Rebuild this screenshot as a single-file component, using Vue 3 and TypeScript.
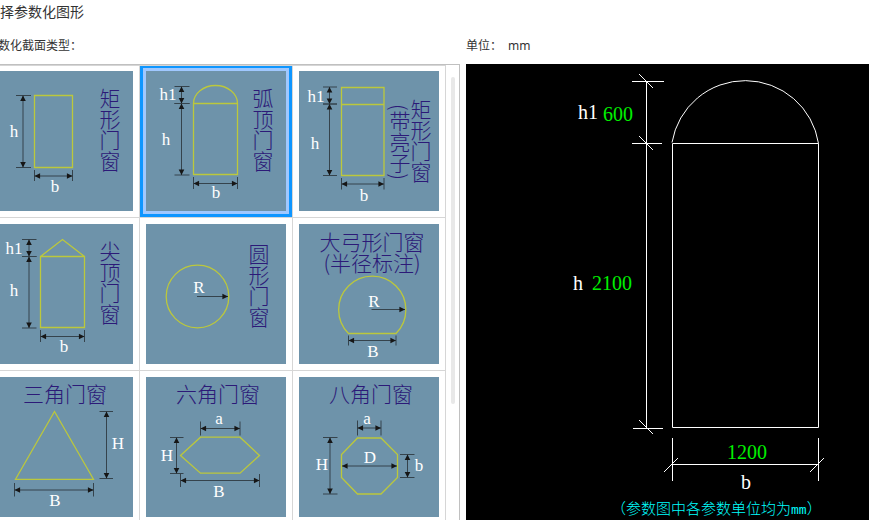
<script setup lang="ts">
import { ref } from 'vue'

type Dim = { at: number; from: number; to: number; t1: number; t2: number }
type Label = { text: string; x: number; y: number }
type Title = { text: string; x: number; y: number; vertical?: boolean }
interface Section {
  name: string
  outline: string
  v?: Dim[]
  h?: Dim[]
  arrow?: { x1: number; x2: number; y: number }
  labels: Label[]
  titles: Title[]
}

const sections: Section[] = [
  {
    name: '矩形门窗',
    outline: 'M41.5 24.5H79.5V96.5H41.5Z',
    v: [{ at: 30, from: 24.5, to: 96.5, t1: 23, t2: 38 }],
    h: [{ at: 105, from: 41.5, to: 79.5, t1: 99, t2: 110 }],
    labels: [{ text: 'h', x: 21, y: 66 }, { text: 'b', x: 62, y: 121 }],
    titles: [{ text: '矩形门窗', x: 117, y: 17, vertical: true }],
  },
  {
    name: '弧顶门窗',
    outline: 'M47.5 32.5H91.5V103.5H47.5ZA22 18 0 0 1 91.5 32.5',
    v: [
      { at: 35.5, from: 15.5, to: 32.5, t1: 28.5, t2: 43.5 },
      { at: 35.5, from: 32.5, to: 104, t1: 28.5, t2: 43.5 },
    ],
    h: [{ at: 112.5, from: 47.5, to: 91.5, t1: 106, t2: 118 }],
    labels: [{ text: 'h1', x: 22, y: 29 }, { text: 'h', x: 20, y: 74 }, { text: 'b', x: 70, y: 127 }],
    titles: [{ text: '弧顶门窗', x: 117, y: 17, vertical: true }],
  },
  {
    name: '矩形门窗(带亮子)',
    outline: 'M42.5 16.5H85V104.5H42.5ZM42.5 33.5H85',
    v: [
      { at: 30.5, from: 16, to: 33, t1: 24, t2: 38 },
      { at: 30.5, from: 33, to: 104.5, t1: 24, t2: 38 },
    ],
    h: [{ at: 113, from: 42.5, to: 85, t1: 107, t2: 118.5 }],
    labels: [{ text: 'h1', x: 17, y: 31 }, { text: 'h', x: 16, y: 78 }, { text: 'b', x: 65, y: 130 }],
    titles: [
      { text: '矩形门窗', x: 122, y: 28, vertical: true },
      { text: '(带亮子)', x: 101, y: 33, vertical: true },
    ],
  },
  {
    name: '尖顶门窗',
    outline: 'M47.5 32.5H91.5V103.5H47.5ZL69.5 15.5L91.5 32.5',
    v: [
      { at: 36, from: 15.5, to: 32.5, t1: 29, t2: 43.5 },
      { at: 36, from: 32.5, to: 104, t1: 29, t2: 43.5 },
    ],
    h: [{ at: 112.5, from: 47.5, to: 91.5, t1: 106, t2: 118 }],
    labels: [{ text: 'h1', x: 21, y: 30 }, { text: 'h', x: 21, y: 72 }, { text: 'b', x: 71, y: 128 }],
    titles: [{ text: '尖顶门窗', x: 117, y: 17, vertical: true }],
  },
  {
    name: '圆形门窗',
    outline: 'M20.2 72.5A31.3 31.3 0 1 1 82.8 72.5A31.3 31.3 0 1 1 20.2 72.5Z',
    arrow: { x1: 51, x2: 82, y: 72.5 },
    labels: [{ text: 'R', x: 53, y: 69 }],
    titles: [{ text: '圆形门窗', x: 113, y: 20, vertical: true }],
  },
  {
    name: '大弓形门窗(半径标注)',
    outline: 'M49.5 109.5A33.6 33.6 0 1 1 97 109.5Z',
    h: [{ at: 116.5, from: 49.5, to: 97, t1: 111.5, t2: 121.5 }],
    arrow: { x1: 72.5, x2: 106, y: 85.5 },
    labels: [{ text: 'R', x: 75, y: 83 }, { text: 'B', x: 74, y: 133 }],
    titles: [{ text: '大弓形门窗', x: 73, y: 26 }, { text: '(半径标注)', x: 73, y: 47 }],
  },
  {
    name: '三角门窗',
    outline: 'M61.5 34.5L100.5 102.3H22.5Z',
    v: [{ at: 113.5, from: 34.5, to: 101.5, t1: 106.5, t2: 120 }],
    h: [{ at: 113, from: 21.5, to: 100.5, t1: 106, t2: 119.5 }],
    labels: [{ text: 'H', x: 125, y: 72 }, { text: 'B', x: 62, y: 129 }],
    titles: [{ text: '三角门窗', x: 72, y: 25 }],
  },
  {
    name: '六角门窗',
    outline: 'M54.5 60.2H94L113.5 78.5L94 96.2H54.5L34.5 78.5Z',
    v: [{ at: 30.5, from: 60.5, to: 96.5, t1: 24, t2: 37.5 }],
    h: [
      { at: 51.5, from: 54.5, to: 94, t1: 44.5, t2: 58.5 },
      { at: 103.5, from: 34.5, to: 113.5, t1: 97, t2: 110 },
    ],
    labels: [{ text: 'a', x: 73, y: 47 }, { text: 'H', x: 21, y: 84 }, { text: 'B', x: 73, y: 120 }],
    titles: [{ text: '六角门窗', x: 72, y: 25 }],
  },
  {
    name: '八角门窗',
    outline: 'M58.5 61H82L98.5 77.5V100.5L82 117H58.5L42.5 100.5V77.5Z',
    v: [
      { at: 31, from: 60.5, to: 117, t1: 24, t2: 38.5 },
      { at: 108.5, from: 77.5, to: 100.5, t1: 101, t2: 115.5 },
    ],
    h: [
      { at: 51, from: 58.5, to: 82, t1: 43.5, t2: 58.5 },
      { at: 89, from: 43, to: 98, t1: 89, t2: 89 },
    ],
    labels: [
      { text: 'a', x: 68, y: 47 }, { text: 'H', x: 23, y: 93 },
      { text: 'D', x: 71, y: 86 }, { text: 'b', x: 120, y: 94 },
    ],
    titles: [{ text: '八角门窗', x: 72, y: 25 }],
  },
]

const selected = ref(1)

const vTicks = (d: Dim) => `M${d.t1} ${d.from}H${d.t2}M${d.t1} ${d.to}H${d.t2}M${d.at} ${d.from}V${d.to}`
const hTicks = (d: Dim) => `M${d.from} ${d.t1}V${d.t2}M${d.to} ${d.t1}V${d.t2}M${d.from} ${d.at}H${d.to}`
const vHeads = (d: Dim) => `M${d.at} ${d.from}l2.8 5.6h-5.6ZM${d.at} ${d.to}l2.8 -5.6h-5.6Z`
const hHeads = (d: Dim) => `M${d.from} ${d.at}l5.6 -2.8v5.6ZM${d.to} ${d.at}l-5.6 -2.8v5.6Z`
</script>

<template>
  <main class="page">
    <h1 class="heading">择参数化图形</h1>
    <div class="columns">
      <section class="types">
        <h2 class="caption shifted">数化截面类型：</h2>
        <div class="list">
          <div class="tiles">
            <button
              v-for="(s, i) in sections"
              :key="s.name"
              type="button"
              class="cell"
              :class="{ selected: selected === i }"
              :aria-label="s.name"
              :aria-pressed="selected === i"
              @click="selected = i"
            >
              <svg class="tile" viewBox="0 0 140 140">
                <path class="outline" :d="s.outline" />
                <template v-for="(d, k) in s.v" :key="'v' + k">
                  <path class="dim" :d="vTicks(d)" />
                  <path class="head" :d="vHeads(d)" />
                </template>
                <template v-for="(d, k) in s.h" :key="'h' + k">
                  <path class="dim" :d="hTicks(d)" />
                  <path class="head" :d="hHeads(d)" />
                </template>
                <template v-if="s.arrow">
                  <path class="dim" :d="`M${s.arrow.x1} ${s.arrow.y}H${s.arrow.x2}`" />
                  <path class="head" :d="`M${s.arrow.x2} ${s.arrow.y}l-5.6 -2.8v5.6Z`" />
                </template>
                <text v-for="l in s.labels" :key="l.text" class="letter" :x="l.x" :y="l.y">{{ l.text }}</text>
                <text
                  v-for="t in s.titles"
                  :key="t.text"
                  class="title"
                  :class="{ vertical: t.vertical }"
                  :x="t.x"
                  :y="t.y"
                >{{ t.text }}</text>
              </svg>
            </button>
          </div>
          <div class="track"><div class="thumb"></div></div>
        </div>
      </section>

      <section class="detail">
        <h2 class="caption unit"><span>单位：</span><span>mm</span></h2>
        <div class="preview">
          <svg class="drawing" viewBox="0 0 403 456">
            <g class="cad">
              <path d="M206.5 79.5H352.5V363.5H206.5ZM180.5 17.5V364.5M166 17.5H198M166 79.5H196M167 364.5H197" />
              <path d="M206.5 374V417M352.5 374V417M206.5 400.5H352.5" />
              <path d="M206 78.5A74.2 74.2 0 0 1 352.5 79.5" />
              <path d="M173 10L187 24M173 72L187 86M173 356L187 370M198 408L212 394M344 408L358 394" />
            </g>
            <g class="name">
              <text x="112" y="55">h1</text>
              <text x="107" y="226">h</text>
              <text x="275" y="425">b</text>
            </g>
            <g class="value">
              <text x="137" y="57">600</text>
              <text x="126" y="226">2100</text>
              <text x="261" y="395">1200</text>
            </g>
            <text class="note" x="145" y="450">（参数图中各参数单位均为<tspan class="mono">mm</tspan>）</text>
          </svg>
        </div>
      </section>
    </div>
  </main>
</template>

<style>
body {
  margin: 0;
  background: #fff;
}
</style>

<style scoped>
.page {
  box-sizing: border-box;
  height: 100vh;
  overflow: hidden;
  display: flex;
  flex-direction: column;
  color: #333;
  font-family: "Noto Sans", "Noto Sans CJK SC", sans-serif;
}
.heading {
  margin: 0;
  padding: 2px 0 4px;
  font-size: 14px;
  font-weight: 400;
  line-height: 20px;
}
.columns {
  flex: 1;
  min-height: 0;
  display: grid;
  grid-template-columns: 460px minmax(0, 1fr);
  column-gap: 6px;
}
.types,
.detail {
  min-height: 0;
  display: flex;
  flex-direction: column;
}
.caption {
  margin: 0;
  padding: 10px 0 8px;
  font-size: 12px;
  font-weight: 400;
  line-height: 20px;
  white-space: nowrap;
}
.shifted {
  margin-left: -2px;
}
.unit {
  display: flex;
  gap: 6px;
}
.list {
  flex: 1;
  min-height: 0;
  overflow: hidden;
  display: flex;
  border-top: 1px solid #c0c0c0;
  border-right: 1px solid #c0c0c0;
}
.tiles {
  flex: none;
  align-self: flex-start;
  display: grid;
  grid-template-columns: repeat(3, 153px);
  margin-left: -13px;
  border-top: 1px solid #d6d6d6;
}
.cell {
  position: relative;
  margin: 0;
  padding: 6px;
  border: 0 solid #d6d6d6;
  border-width: 0 1px 1px 0;
  background: #fff;
  cursor: pointer;
}
.cell:nth-child(-n + 3) {
  padding-top: 5px;
}
.cell.selected {
  background: #a0c8ff;
}
.cell.selected::before {
  content: "";
  position: absolute;
  inset: 0;
  border: 3px solid #0f96ff;
}
.cell.selected:nth-child(-n + 3)::before {
  border-top-width: 2px;
}
.tile {
  display: block;
  width: 100%;
  background: #6e93aa;
}
.outline {
  fill: none;
  stroke: #bcc83c;
  stroke-width: 1.3;
}
.dim {
  fill: none;
  stroke: #35434c;
  stroke-width: 1;
}
.head {
  fill: #161616;
}
.letter {
  fill: #fff;
  font-family: "Liberation Serif", serif;
  font-size: 17px;
  text-anchor: middle;
}
.title {
  fill: #2c1a78;
  font-family: "Noto Sans CJK SC", sans-serif;
  font-size: 21px;
  font-weight: 300;
  text-anchor: middle;
}
.vertical {
  writing-mode: vertical-rl;
  text-anchor: start;
}
.track {
  flex: 1;
  display: flex;
  justify-content: center;
  align-items: flex-start;
  padding: 12px 0 0;
}
.thumb {
  width: 4px;
  height: 327px;
  border-radius: 2px;
  background: #e8e8e8;
}
.preview {
  flex: 1;
  min-height: 0;
  overflow: hidden;
  background: #000;
}
.drawing {
  display: block;
  width: 100%;
}
.cad {
  fill: none;
  stroke: #fff;
  stroke-width: 1;
}
.name,
.value {
  font-family: "Liberation Serif", serif;
  font-size: 20px;
}
.name {
  fill: #fff;
}
.value {
  fill: #00f000;
}
.note {
  fill: #00ffff;
  font-family: "Noto Sans CJK SC", sans-serif;
  font-size: 15px;
  font-weight: 300;
}
.mono {
  font-family: "Liberation Mono", monospace;
  font-size: 13px;
}
</style>
